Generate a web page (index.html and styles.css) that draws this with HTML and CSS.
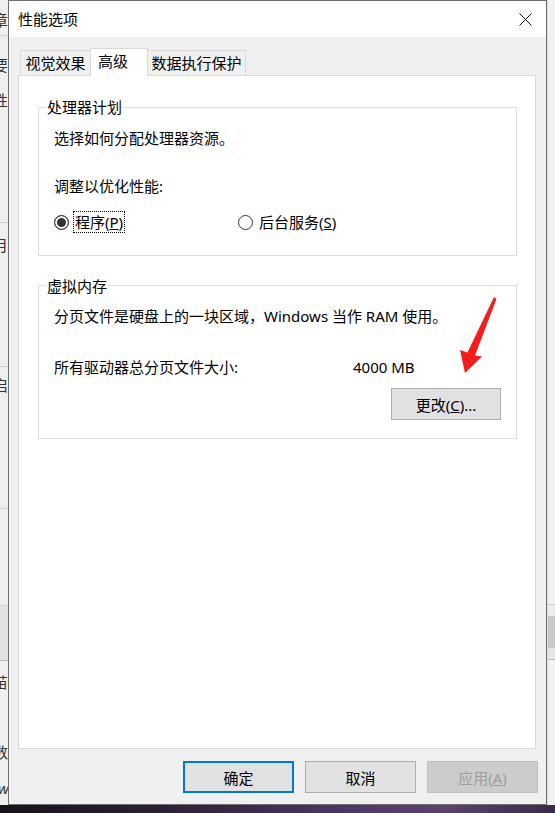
FILE: index.html
```html
<!DOCTYPE html>
<html lang="zh-CN">
<head>
    <meta charset="UTF-8">
    <title>性能选项</title>
    <link rel="stylesheet" href="styles.css">
</head>
<body>
    <div class="screen">
        <!-- window behind the dialog, left edge -->
        <div class="bg-left">
            <div class="bg-block block-a"><span class="frag">章</span></div>
            <div class="bg-block block-b"><span class="frag">要</span><span class="frag frag-b2">性</span></div>
            <div class="bg-block block-c"><span class="frag">月</span></div>
            <div class="bg-block block-d"><span class="frag">启</span></div>
            <div class="bg-block block-e"></div>
            <div class="bg-band"></div>
            <div class="block-f"><span class="frag">苗</span><span class="frag frag-f2">数</span><span class="frag frag-w">w</span></div>
        </div>

        <div class="dialog">
            <div class="titlebar">
                <span class="title">性能选项</span>
                <svg class="close" width="13" height="13" viewBox="0 0 13 13">
                    <path d="M0.5 0.5L12.5 12.5M12.5 0.5L0.5 12.5" stroke="#111" stroke-width="1" fill="none"/>
                </svg>
            </div>

            <div class="content">
                <div class="tabs">
                    <div class="tab tab-visual">视觉效果</div>
                    <div class="tab tab-active">高级</div>
                    <div class="tab tab-dep">数据执行保护</div>
                </div>

                <div class="panel">
                    <div class="group group-cpu">
                        <div class="group-label">处理器计划</div>
                        <p class="line line-intro">选择如何分配处理器资源。</p>
                        <p class="line line-adjust">调整以优化性能:</p>
                        <div class="radios">
                            <div class="option option-first">
                                <span class="radio checked"></span>
                                <span class="option-text focused">程序(<u>P</u>)</span>
                            </div>
                            <div class="option">
                                <span class="radio"></span>
                                <span class="option-text">后台服务(<u>S</u>)</span>
                            </div>
                        </div>
                    </div>

                    <div class="group group-vm">
                        <div class="group-label">虚拟内存</div>
                        <p class="line line-paging">分页文件是硬盘上的一块区域，Windows 当作 RAM 使用。</p>
                        <div class="size-row">
                            <span class="size-label">所有驱动器总分页文件大小:</span>
                            <span class="size-value">4000 MB</span>
                        </div>
                        <div class="change-row">
                            <button class="btn btn-change">更改(<u>C</u>)...</button>
                        </div>
                        <svg class="arrow" width="45" height="80" viewBox="0 0 45 80">
                            <path d="M39 2 L41.5 4 L20 60.5 L27 61.5 L10 78 L5 55 L12.5 57.5 Z" fill="#f41d1d"/>
                        </svg>
                    </div>
                </div>
            </div>

            <div class="footer">
                <button class="btn btn-ok">确定</button>
                <button class="btn">取消</button>
                <button class="btn btn-disabled">应用(<u>A</u>)</button>
            </div>
        </div>

        <!-- window behind the dialog, right edge -->
        <div class="bg-right">
            <div class="bg-right-top"></div>
            <div class="bg-right-band"></div>
            <div class="bg-right-rest"></div>
        </div>
    </div>
    <div class="taskbar"></div>
</body>
</html>
```

FILE: styles.css
```css
* {
    box-sizing: border-box;
}

body {
    margin: 0;
    width: 555px;
    height: 813px;
    overflow: hidden;
    font-family: "Noto Sans", "Noto Sans CJK SC", sans-serif;
    font-size: 15px;
    color: #000;
    background: #f0f0f0;
}

.screen {
    display: flex;
    height: 805px;
}

/* background window strips */
.bg-left {
    width: 8px;
    flex-shrink: 0;
    overflow: hidden;
    background: #efefef;
    font-family: "Noto Sans CJK SC", sans-serif;
}

.bg-block {
    border-bottom: 1px solid #d2d2d2;
}

.frag {
    display: block;
    height: 16px;
    line-height: 16px;
    margin-left: -7px;
    color: #333;
    white-space: nowrap;
}

.block-a {
    height: 36px;
    padding-top: 12px;
}

.block-b {
    height: 187px;
    padding-top: 21px;
}

.frag-b2 {
    margin-top: 19px;
}

.block-c {
    height: 144px;
    padding-top: 14px;
}

.block-d {
    height: 142px;
    padding-top: 10px;
}

.block-e {
    height: 97px;
}

.bg-band {
    height: 55px;
    background: #e2e2e2;
    border-bottom: 1px solid #b9b9b9;
}

.block-f {
    padding-top: 13px;
}

.frag-f2 {
    margin-top: 54px;
}

.frag-w {
    margin-top: 20px;
    margin-left: -2px;
    font-family: "Noto Sans", sans-serif;
    font-style: italic;
}

.bg-right {
    width: 8px;
    flex-shrink: 0;
    background: #f2f2f2;
    border-left: 1px solid #dadada;
}

.bg-right-top {
    height: 605px;
    border-bottom: 1px solid #cfcfcf;
}

.bg-right-band {
    height: 55px;
    background: linear-gradient(#ececec 0, #ececec 11px, #c9c9c9 11px, #c9c9c9 43px, #e6e6e6 43px);
    border-bottom: 1px solid #bcbcbc;
}

.taskbar {
    height: 8px;
    background: linear-gradient(90deg, #17121b, #2c2036 30%, #4d3563 60%, #5c416f 80%, #3a2b4a);
}

/* dialog */
.dialog {
    width: 539px;
    height: 805px;
    flex-shrink: 0;
    display: flex;
    flex-direction: column;
    background: #f0f0f0;
    border: 1px solid #6f6f6f;
}

.titlebar {
    height: 36px;
    display: flex;
    align-items: center;
    justify-content: space-between;
    padding: 0 14px 0 9px;
    background: #fff;
}

.title {
    font-family: "Noto Sans CJK SC", sans-serif;
    line-height: 20px;
}

.close {
    display: block;
}

.content {
    padding: 11px 10px 0 9px;
}

.tabs {
    position: relative;
    z-index: 1;
    display: flex;
    align-items: flex-start;
    height: 28px;
    margin-bottom: -1px;
    padding-left: 2px;
}

.tab {
    height: 25px;
    margin-top: 2px;
    border: 1px solid #d9d9d9;
    border-bottom: none;
    background: #f0f0f0;
    line-height: 23px;
    text-align: center;
    font-family: "Noto Sans CJK SC", sans-serif;
}

.tab-visual {
    width: 71px;
}

.tab-active {
    width: 58px;
    height: 28px;
    margin-top: 0;
    margin-left: -1px;
    padding-left: 7px;
    text-align: left;
    background: #fff;
}

.tab-dep {
    width: 99px;
    margin-left: -1px;
}

.panel {
    height: 674px;
    padding: 0 18px 0 19px;
    background: #fff;
    border: 1px solid #d9d9d9;
    overflow: hidden;
}

.group {
    position: relative;
    border: 1px solid #dcdcdc;
    padding: 0 15px;
}

.group-cpu {
    margin-top: 31px;
    padding-bottom: 22px;
}

.group-vm {
    margin-top: 29px;
    padding-bottom: 18px;
}

.group-label {
    width: fit-content;
    height: 20px;
    line-height: 20px;
    margin-left: -8px;
    padding: 0 1px;
    background: #fff;
    font-family: "Noto Sans CJK SC", sans-serif;
}

.group-cpu .group-label {
    margin-top: -11px;
}

.group-vm .group-label {
    margin-top: -10px;
}

.line {
    margin: 0;
    line-height: 20px;
    white-space: nowrap;
}

.line-intro {
    margin-top: 11px;
}

.line-adjust {
    margin-top: 28px;
}

.radios {
    display: flex;
    align-items: center;
    height: 22px;
    margin-top: 15px;
}

.option {
    display: flex;
    align-items: center;
}

.option-first {
    width: 184px;
}

.radio {
    width: 15px;
    height: 15px;
    border: 1px solid #333;
    border-radius: 50%;
    background: #fff;
}

.radio.checked {
    background: #333;
    box-shadow: inset 0 0 0 2px #fff;
}

.option-text {
    margin-left: 4px;
    padding: 0 1px;
    line-height: 20px;
    border: 1px solid transparent;
}

.option-text.focused {
    border: 1px dotted #000;
}

.line-paging {
    margin-top: 10px;
}

.size-row {
    display: flex;
    line-height: 20px;
    margin-top: 31px;
}

.size-label {
    width: 299px;
}

.change-row {
    display: flex;
    justify-content: flex-end;
    margin-top: 11px;
}

.btn {
    width: 111px;
    height: 32px;
    padding: 0;
    border: 1px solid #adadad;
    background: #e1e1e1;
    font-family: "Noto Sans", "Noto Sans CJK SC", sans-serif;
    font-size: 15px;
    color: #000;
}

.btn-change {
    width: 110px;
}

.btn-ok {
    border: 2px solid #0078d7;
}

.btn-disabled {
    background: #cccccc;
    border-color: #bfbfbf;
    color: #9d9d9d;
}

.arrow {
    position: absolute;
    left: 416px;
    top: 9px;
}

.footer {
    display: flex;
    justify-content: flex-end;
    gap: 11px;
    height: 55px;
    padding: 12px 8px 0 0;
}
```
